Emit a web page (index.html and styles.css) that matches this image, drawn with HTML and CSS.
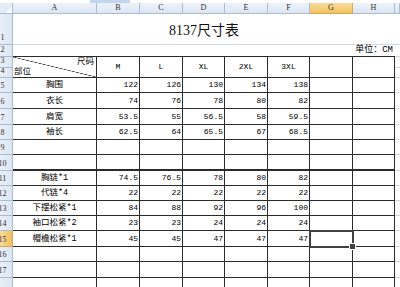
FILE: index.html
```html
<!DOCTYPE html>
<html>
<head>
<meta charset="utf-8">
<link rel="stylesheet" href="styles.css">
</head>
<body>
<div class="topbar"><span class="tab"></span></div>
<div class="sheet">
  <div class="corner"></div>
  <div class="ch">A</div><div class="ch">B</div><div class="ch">C</div><div class="ch">D</div>
  <div class="ch">E</div><div class="ch">F</div><div class="ch hl">G</div><div class="ch">H</div><div class="ch"></div>

  <div class="rh">1</div><div class="title span8">8137尺寸表</div><div class="gl"></div>
  <div class="rh">2</div><div class="unit span8">单位：CM</div><div class="gl"></div>

  <div class="rh">3</div>
  <div class="c diag rs2"><span class="d-top">尺码</span><span class="d-bot">部位</span></div>
  <div class="c mid rs2">M</div><div class="c mid rs2">L</div><div class="c mid rs2">XL</div>
  <div class="c mid rs2">2XL</div><div class="c mid rs2">3XL</div>
  <div class="c rs2"></div><div class="c rs2"></div><div class="gl"></div>
  <div class="rh">4</div><div class="gl"></div>

  <div class="rh">5</div><div class="c lbl">胸围</div><div class="c num">122</div><div class="c num">126</div><div class="c num">130</div><div class="c num">134</div><div class="c num">138</div><div class="c"></div><div class="c"></div><div class="gl"></div>
  <div class="rh">6</div><div class="c lbl">衣长</div><div class="c num">74</div><div class="c num">76</div><div class="c num">78</div><div class="c num">80</div><div class="c num">82</div><div class="c"></div><div class="c"></div><div class="gl"></div>
  <div class="rh">7</div><div class="c lbl">肩宽</div><div class="c num">53.5</div><div class="c num">55</div><div class="c num">56.5</div><div class="c num">58</div><div class="c num">59.5</div><div class="c"></div><div class="c"></div><div class="gl"></div>
  <div class="rh">8</div><div class="c lbl">袖长</div><div class="c num">62.5</div><div class="c num">64</div><div class="c num">65.5</div><div class="c num">67</div><div class="c num">68.5</div><div class="c"></div><div class="c"></div><div class="gl"></div>
  <div class="rh">9</div><div class="c"></div><div class="c"></div><div class="c"></div><div class="c"></div><div class="c"></div><div class="c"></div><div class="c"></div><div class="c"></div><div class="gl"></div>
  <div class="rh">10</div><div class="c thick"></div><div class="c thick"></div><div class="c thick"></div><div class="c thick"></div><div class="c thick"></div><div class="c thick"></div><div class="c thick"></div><div class="c thick"></div><div class="gl"></div>

  <div class="rh">11</div><div class="c lbl">胸链*1</div><div class="c num">74.5</div><div class="c num">76.5</div><div class="c num">78</div><div class="c num">80</div><div class="c num">82</div><div class="c"></div><div class="c"></div><div class="gl"></div>
  <div class="rh">12</div><div class="c lbl">代链*4</div><div class="c num">22</div><div class="c num">22</div><div class="c num">22</div><div class="c num">22</div><div class="c num">22</div><div class="c"></div><div class="c"></div><div class="gl"></div>
  <div class="rh">13</div><div class="c lbl">下摆松紧*1</div><div class="c num">84</div><div class="c num">88</div><div class="c num">92</div><div class="c num">96</div><div class="c num">100</div><div class="c"></div><div class="c"></div><div class="gl"></div>
  <div class="rh">14</div><div class="c lbl">袖口松紧*2</div><div class="c num">23</div><div class="c num">23</div><div class="c num">24</div><div class="c num">24</div><div class="c num">24</div><div class="c"></div><div class="c"></div><div class="gl"></div>
  <div class="rh hl">15</div><div class="c lbl">帽檐松紧*1</div><div class="c num">45</div><div class="c num">45</div><div class="c num">47</div><div class="c num">47</div><div class="c num">47</div><div class="c active"></div><div class="c"></div><div class="gl"></div>
  <div class="rh">16</div><div class="c"></div><div class="c"></div><div class="c"></div><div class="c"></div><div class="c"></div><div class="c"></div><div class="c"></div><div class="c"></div><div class="gl"></div>
  <div class="rh">17</div><div class="c"></div><div class="c"></div><div class="c"></div><div class="c"></div><div class="c"></div><div class="c"></div><div class="c"></div><div class="c"></div><div class="gl"></div>
  <div class="rh">18</div><div class="c"></div><div class="c"></div><div class="c"></div><div class="c"></div><div class="c"></div><div class="c"></div><div class="c"></div><div class="c"></div><div class="gl"></div>
</div>
</body>
</html>
```

FILE: styles.css
```css
* { box-sizing: border-box; margin: 0; padding: 0; }
html, body { width: 400px; height: 287px; overflow: hidden; background: #fff; }
body {
  font-family: "Liberation Mono", "Noto Sans CJK SC", monospace;
  font-size: 8px;
  color: #000;
}
.topbar { height: 3px; display: flex; padding-left: 90px; }
.tab { width: 40px; background: #c2d5ee; }

.sheet {
  display: grid;
  grid-template-columns: 13px 84px 43px 43px 42px 43px 42px 43px 42px 5px;
  grid-template-rows: 11px 31px 12px 11px 10px 15px 16px 16px 15px 15px 16px 15px 15px 15px 15px 16px 15px 16px 20px;
}

.corner, .ch, .rh {
  border-right: 1px solid #a9bdd4;
  border-bottom: 1px solid #a9bdd4;
  color: #333;
  font-family: "Liberation Serif", serif;
  font-size: 8px;
  line-height: 10px;
}
.corner {
  background: linear-gradient(135deg, #e3ebf6 72%, #f7f9fc 72%);
}
.ch {
  background: linear-gradient(#eef3fa, #dbe5f2);
  display: flex;
  justify-content: center;
  align-items: center;
}
.rh {
  background: linear-gradient(90deg, #e9eff8, #dce6f2);
  display: flex;
  justify-content: center;
  align-items: flex-end;
  padding-right: 7px;
  padding-bottom: 1px;
  overflow: hidden;
}
.ch.hl { background: linear-gradient(#f9dca0, #f1c15f); border-color: #d8a850; }
.rh.hl { background: linear-gradient(90deg, #f9dca0, #f1c15f); border-color: #d8a850; }

.span8 { grid-column: span 8; }
.rs2 { grid-row: span 2; }

.title {
  border-bottom: 1px solid #d0d7e5;
  display: flex;
  justify-content: center;
  align-items: flex-end;
  padding-bottom: 6px;
  font-family: "Liberation Serif", "Noto Sans CJK SC", serif;
  font-size: 14px;
  line-height: 15px;
  color: #111;
}
.unit {
  border-bottom: 1px solid #2b2b2b;
  display: flex;
  justify-content: flex-end;
  align-items: flex-end;
  padding-right: 2px;
  font-size: 9px;
  line-height: 11px;
}
.gl { border-bottom: 1px solid #d0d7e5; }

.c {
  border-right: 1px solid #2b2b2b;
  border-bottom: 1px solid #2b2b2b;
  display: flex;
  align-items: flex-end;
  padding: 0 1px 2px 1px;
  line-height: 10px;
  white-space: nowrap;
}
.c.thick { border-bottom-width: 2px; }
.num { justify-content: flex-end; }
.lbl { justify-content: center; font-size: 8.5px; }
.mid { justify-content: center; align-items: center; padding-bottom: 0; }

.diag {
  flex-direction: column;
  justify-content: space-between;
  align-items: stretch;
  padding: 0 2px 0 1px;
  font-size: 8.5px;
  background: linear-gradient(to top right, transparent calc(50% - 0.6px), #2b2b2b 50%, transparent calc(50% + 0.6px));
}
.d-top { align-self: flex-end; line-height: 10px; }
.d-bot { align-self: flex-start; line-height: 10px; }

.active {
  position: relative;
  outline: 2px solid #404040;
  outline-offset: -1px;
  z-index: 2;
}
.active::after {
  content: "";
  position: absolute;
  right: -4px;
  bottom: -4px;
  width: 5px;
  height: 5px;
  background: #404040;
  border: 1px solid #fff;
}
```
